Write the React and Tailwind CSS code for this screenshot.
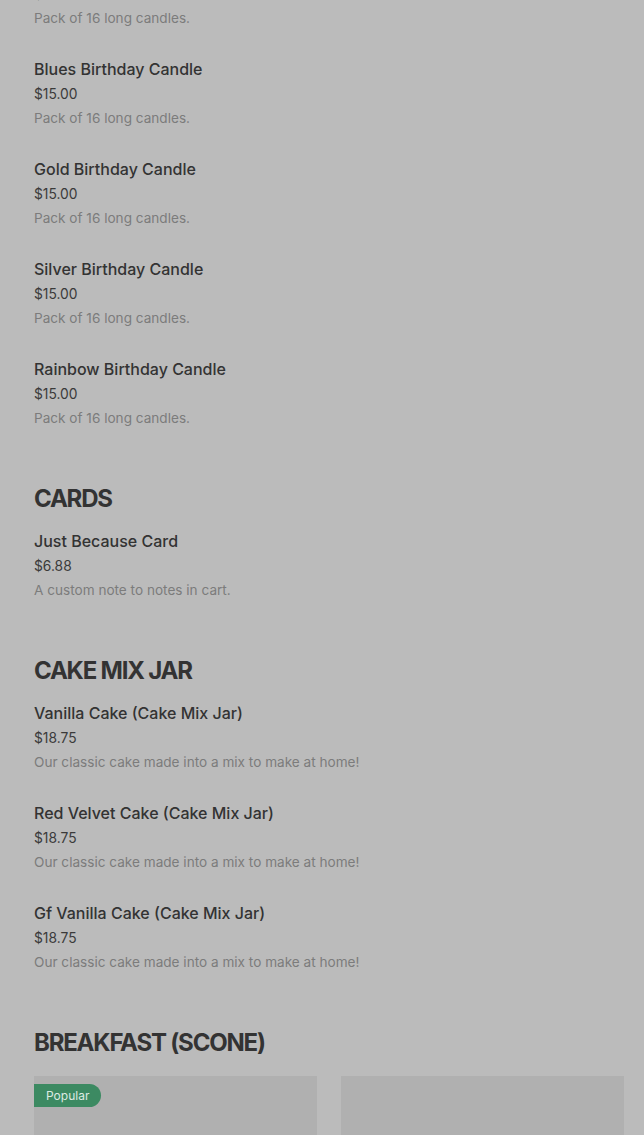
import React from 'react'

const candles = ['Pink Birthday Candle', 'Blues Birthday Candle', 'Gold Birthday Candle', 'Silver Birthday Candle', 'Rainbow Birthday Candle']

const sections = [
    {
        name: 'CARDS',
        items: [{ title: 'Just Because Card', price: '$6.88', desc: 'A custom note to notes in cart.' }],
    },
    {
        name: 'CAKE MIX JAR',
        items: [
            { title: 'Vanilla Cake (Cake Mix Jar)', price: '$18.75', desc: 'Our classic cake made into a mix to make at home!' },
            { title: 'Red Velvet Cake (Cake Mix Jar)', price: '$18.75', desc: 'Our classic cake made into a mix to make at home!' },
            { title: 'Gf Vanilla Cake (Cake Mix Jar)', price: '$18.75', desc: 'Our classic cake made into a mix to make at home!' },
        ],
    },
]

function Item({ title, price, desc }) {
    return (
        <div className="pb-[27px]">
            <div className="text-[16px] leading-[25px] font-medium text-[#333333]">{title}</div>
            <div className="text-[13.8px] leading-[24px] text-[#3a3a3a]">{price}</div>
            <div className="text-[13.6px] leading-[24px] text-[#7c7c7c]">{desc}</div>
        </div>
    )
}

function Heading({ children }) {
    return (
        <h2 className="mt-[26px] mb-[14px] text-[24px] leading-[32px] font-bold tracking-[-0.05em] text-[#333333]">
            {children}
        </h2>
    )
}

export default function App() {
    return (
        <div className="h-[1135px] overflow-hidden bg-[#bbbbbb] pl-[34px] pr-[20px]" style={{ fontFamily: 'Inter, "Liberation Sans", sans-serif' }}>
            {/* list is scrolled: first item sits partly above the top edge */}
            <div className="-mt-[43px]">
                {candles.map((c) => (
                    <Item key={c} title={c} price="$15.00" desc="Pack of 16 long candles." />
                ))}
            </div>

            {sections.map((s) => (
                <div key={s.name}>
                    <Heading>{s.name}</Heading>
                    {s.items.map((it) => (
                        <Item key={it.title} {...it} />
                    ))}
                </div>
            ))}

            <Heading>BREAKFAST (SCONE)</Heading>
            <div className="mt-[17px] grid grid-cols-2 gap-[24px]">
                <div className="relative h-[120px] bg-[#b0b0b0]">
                    <span className="absolute left-0 top-[8px] rounded-r-full bg-[#3c8a62] px-[12px] text-[12px] leading-[23px] text-[#dcebe2]">
                        Popular
                    </span>
                </div>
                <div className="h-[120px] bg-[#b0b0b0]" />
            </div>
        </div>
    )
}
